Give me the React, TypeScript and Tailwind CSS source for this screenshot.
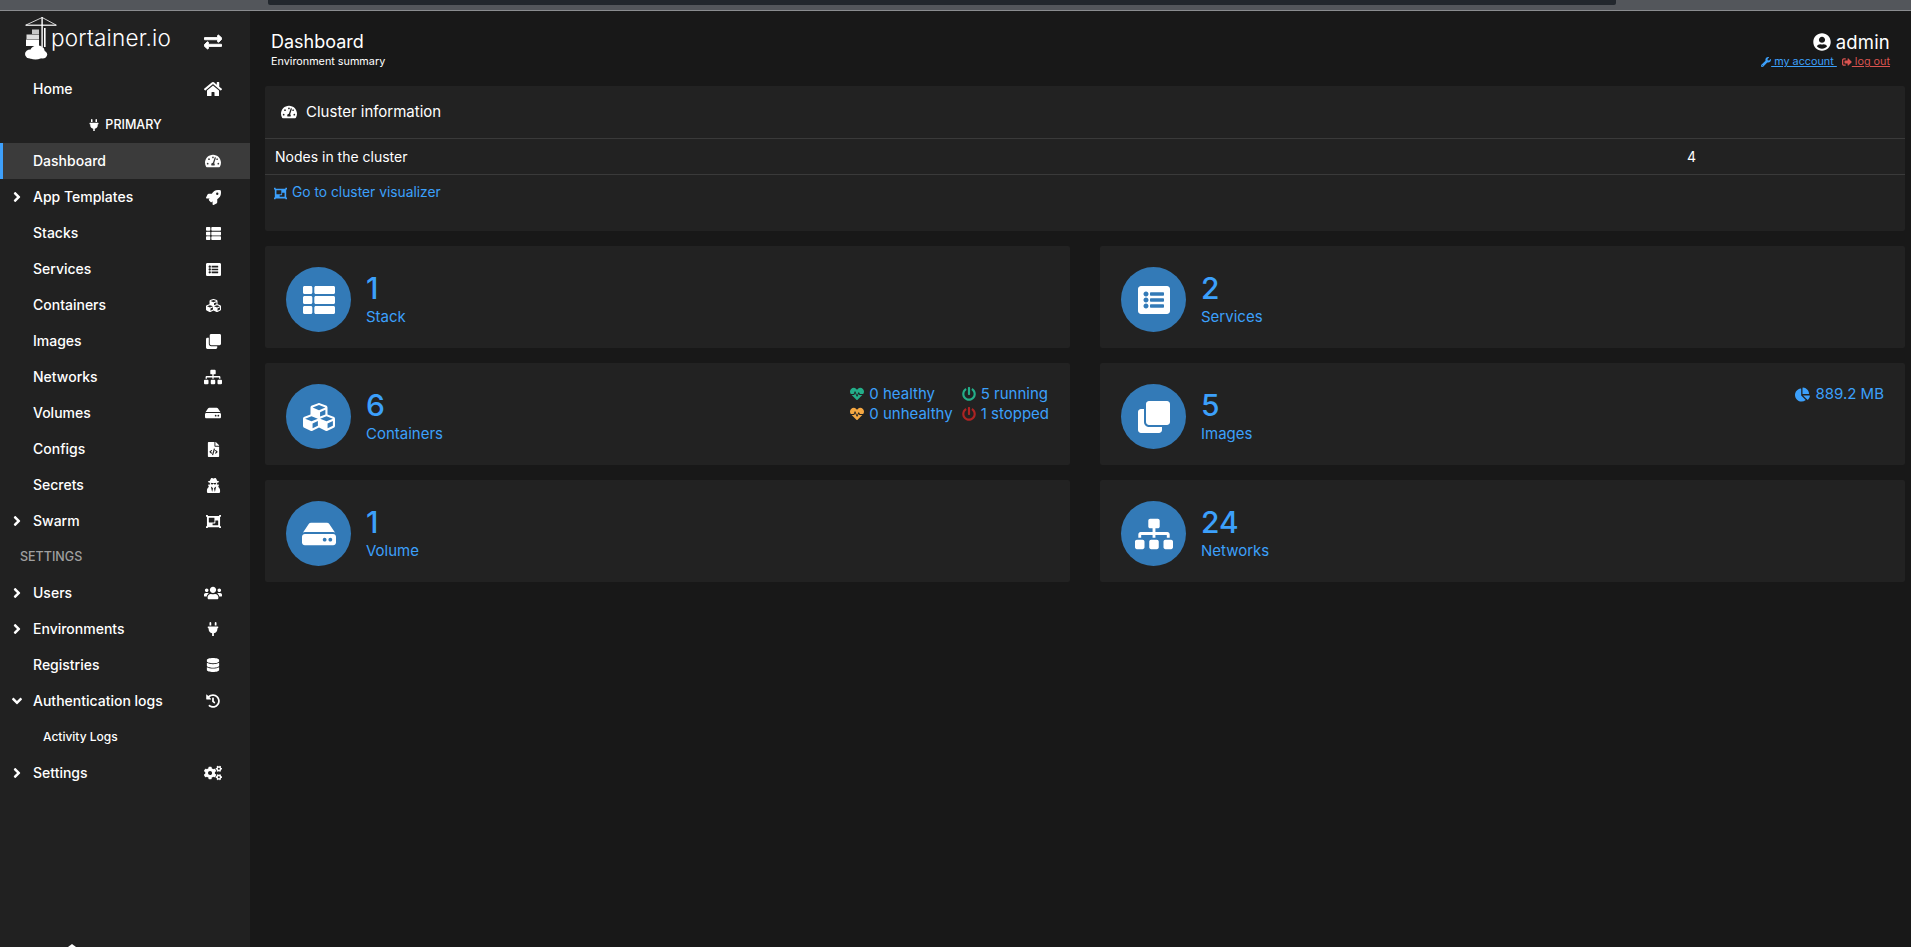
import { ReactNode } from "react";
import {
  FaAngleDown,
  FaAngleRight,
  FaChartPie,
  FaClone,
  FaCogs,
  FaCubes,
  FaDatabase,
  FaExchangeAlt,
  FaFileCode,
  FaHdd,
  FaHeartbeat,
  FaHistory,
  FaHome,
  FaListAlt,
  FaObjectGroup,
  FaPlug,
  FaPowerOff,
  FaRocket,
  FaSignOutAlt,
  FaSitemap,
  FaTachometerAlt,
  FaThList,
  FaUserCircle,
  FaUsers,
  FaUserSecret,
  FaWrench,
} from "react-icons/fa";

type NavItem = {
  label: string;
  icon: ReactNode;
  caret?: "right" | "down";
  active?: boolean;
};

const topItems: NavItem[] = [
  { label: "Dashboard", icon: <FaTachometerAlt size={16} />, active: true },
  { label: "App Templates", icon: <FaRocket size={15} />, caret: "right" },
  { label: "Stacks", icon: <FaThList size={15} /> },
  { label: "Services", icon: <FaListAlt size={15} /> },
  { label: "Containers", icon: <FaCubes size={15} /> },
  { label: "Images", icon: <FaClone size={15} /> },
  { label: "Networks", icon: <FaSitemap size={18} /> },
  { label: "Volumes", icon: <FaHdd size={16} /> },
  { label: "Configs", icon: <FaFileCode size={15} /> },
  { label: "Secrets", icon: <FaUserSecret size={15} /> },
  { label: "Swarm", icon: <FaObjectGroup size={15} />, caret: "right" },
];

const settingsItems: NavItem[] = [
  { label: "Users", icon: <FaUsers size={18} />, caret: "right" },
  { label: "Environments", icon: <FaPlug size={14} />, caret: "right" },
  { label: "Registries", icon: <FaDatabase size={14} /> },
  { label: "Authentication logs", icon: <FaHistory size={14} />, caret: "down" },
];

function NavRow({ item }: { item: NavItem }) {
  return (
    <div className={`relative flex h-9 items-center text-[14px] font-medium text-white ${item.active ? "bg-[#3b3b3b]" : ""}`}>
      {item.active && <div className="absolute inset-y-0 left-0 w-[3px] bg-[#3ea0fb]" />}
      <div className="flex w-[33px] justify-start pl-[9px]">
        {item.caret === "right" && <FaAngleRight size={16} />}
        {item.caret === "down" && <FaAngleDown size={16} />}
      </div>
      <span className="mb-[2px] flex-1">{item.label}</span>
      <div className="mr-[24px] flex w-[26px] justify-center">{item.icon}</div>
    </div>
  );
}

// crane with a container stack and a cloud under it
function Logo() {
  return (
    <svg viewBox="0 0 32 44" className="h-[44px] w-[32px] shrink-0 text-white" fill="currentColor">
      <path d="M17.2 0.5L1 8M17.2 0.5L31 8" stroke="currentColor" strokeWidth="0.8" fill="none" />
      <rect x="0.5" y="7.6" width="31" height="1.2" />
      <rect x="16.4" y="0" width="1.4" height="30" />
      <rect x="19" y="11" width="1.6" height="19" />
      <rect x="7" y="12.5" width="7" height="4.5" opacity="0.75" />
      <rect x="1.5" y="17.5" width="12.5" height="4.5" opacity="0.85" />
      <rect x="1" y="22.5" width="13" height="6.5" />
      <ellipse cx="5.5" cy="37" rx="5.5" ry="4.6" />
      <ellipse cx="12.5" cy="33.5" rx="7" ry="5" />
      <ellipse cx="17.5" cy="37.5" rx="4.7" ry="4" />
      <ellipse cx="10.5" cy="39.5" rx="7" ry="3" />
    </svg>
  );
}

function StatCard({ icon, value, label, right }: { icon: ReactNode; value: string; label: string; right?: ReactNode }) {
  return (
    <div className="flex h-[102px] items-start rounded-[2px] bg-[#222222] pl-[21px] pr-[21px] pt-[21px]">
      <div className="flex h-[65px] w-[65px] shrink-0 items-center justify-center rounded-full bg-[#337ab7] text-white">
        {icon}
      </div>
      <div className="ml-[15px] text-[#3ca0fb]">
        <div className="mt-[4px] h-[34px] text-[30px] font-medium leading-[34px]">{value}</div>
        <div className="mt-[2px] text-[15px] leading-[20px]">{label}</div>
      </div>
      <div className="ml-auto">{right}</div>
    </div>
  );
}

function Stat({ icon, children }: { icon: ReactNode; children: ReactNode }) {
  return (
    <div className="flex h-5 items-center gap-[5px] text-[15px] text-[#3ca0fb]">
      {icon}
      <span>{children}</span>
    </div>
  );
}

export default function App() {
  return (
    <div className="flex h-screen flex-col overflow-hidden bg-[#181818] font-['Inter',sans-serif]">
      <div className="h-[11px] shrink-0 border-b border-[#8a8c8f] bg-[#53565b] pl-[268px] pr-[295px]">
        <div className="h-[5px] rounded-b-[2px] bg-[#22272d]" />
      </div>

      <div className="flex min-h-0 flex-1">
        <aside className="relative flex w-[250px] shrink-0 flex-col bg-[#212121]">
          <div className="flex h-[60px] items-start pl-[25px] pt-[6px]">
            <Logo />
            <span className="ml-[-6px] mt-[6px] text-[22.5px] font-light leading-[30px] tracking-[0.2px] text-white">portainer.io</span>
            <FaExchangeAlt size={18} stroke="currentColor" strokeWidth={24} className="absolute left-[204px] top-[22px] text-white" />
          </div>

          <NavRow item={{ label: "Home", icon: <FaHome size={18} /> }} />
          <div className="flex h-9 items-center justify-center gap-[5px] text-[12.5px] font-medium text-white">
            <FaPlug size={12} />
            <span>PRIMARY</span>
          </div>
          {topItems.map((item) => (
            <NavRow key={item.label} item={item} />
          ))}
          <div className="flex h-9 items-center pl-[20px] text-[12.5px] font-medium text-[#a0a0a0]">SETTINGS</div>
          {settingsItems.map((item) => (
            <NavRow key={item.label} item={item} />
          ))}
          <div className="flex h-9 items-center pl-[43px] text-[12px] font-medium text-white">Activity Logs</div>
          <NavRow item={{ label: "Settings", icon: <FaCogs size={18} />, caret: "right" }} />

          <div className="absolute bottom-0 left-[68px] h-0 w-0 border-x-[4px] border-b-[3px] border-x-transparent border-b-white" />
        </aside>

        <main className="min-w-0 flex-1 pl-[15px] pr-[6px]">
          <header className="flex h-[75px] items-start justify-between pl-[6px] pr-[15px] pt-[21px] text-white">
            <div>
              <div className="text-[18px] leading-[20px]">Dashboard</div>
              <div className="mt-[2px] text-[10.8px] leading-[16px]">Environment summary</div>
            </div>
            <div className="text-right">
              <div className="flex items-center justify-end gap-[5px] text-[18.5px] leading-[20px] tracking-[0.2px]">
                <FaUserCircle size={18} />
                admin
              </div>
              <div className="mt-[2px] flex items-center justify-end text-[10.8px] leading-[16px]">
                <a className="flex items-center text-[#3ca0fb] underline">
                  <FaWrench size={10} />
                  <span>&nbsp;my account&nbsp;</span>
                </a>
                <a className="ml-[5px] flex items-center text-[#d9534f] underline">
                  <FaSignOutAlt size={10} />
                  <span>&nbsp;log out</span>
                </a>
              </div>
            </div>
          </header>

          <section className="h-[145px] rounded-[2px] bg-[#222222]">
            <div className="flex h-[53px] items-center gap-[9px] border-b border-[#3a3a3a] pl-[16px] text-[15px] text-white">
              <FaTachometerAlt size={16} />
              <span>Cluster information</span>
            </div>
            <div className="flex h-9 items-center border-b border-[#3a3a3a] pl-[10px] text-[14px] text-white">
              <span className="mb-[1px] w-[1412px]">Nodes in the cluster</span>
              <span className="mb-[1px]">4</span>
            </div>
            <a className="flex h-9 items-center gap-[5px] pl-[9px] text-[13.8px] text-[#3ca0fb]">
              <FaObjectGroup size={13} />
              <span className="mb-[2px]">Go to cluster visualizer</span>
            </a>
          </section>

          <div className="mt-[15px] grid grid-cols-2 gap-x-[30px] gap-y-[15px]">
            <StatCard icon={<FaThList size={32} />} value="1" label="Stack" />
            <StatCard icon={<FaListAlt size={32} />} value="2" label="Services" />
            <StatCard
              icon={<FaCubes size={32} />}
              value="6"
              label="Containers"
              right={
                <div className="grid grid-cols-[auto_auto] gap-x-[9px]">
                  <Stat icon={<FaHeartbeat size={14} className="text-[#23ae89]" />}>0 healthy</Stat>
                  <Stat icon={<FaPowerOff size={14} className="text-[#23ae89]" />}>5 running</Stat>
                  <Stat icon={<FaHeartbeat size={14} className="text-[#f5a742]" />}>0 unhealthy</Stat>
                  <Stat icon={<FaPowerOff size={14} className="text-[#ae2323]" />}>1 stopped</Stat>
                </div>
              }
            />
            <StatCard
              icon={<FaClone size={32} />}
              value="5"
              label="Images"
              right={<Stat icon={<FaChartPie size={15} />}>889.2 MB</Stat>}
            />
            <StatCard icon={<FaHdd size={34} />} value="1" label="Volume" />
            <StatCard icon={<FaSitemap size={38} />} value="24" label="Networks" />
          </div>
        </main>
      </div>
    </div>
  );
}
